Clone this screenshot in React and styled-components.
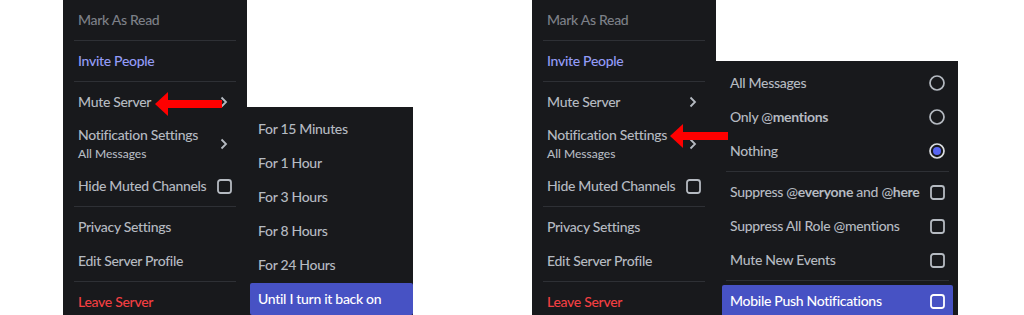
import React from 'react';
import styled, { createGlobalStyle } from 'styled-components';

const Global = createGlobalStyle`
  html, body { margin:0; padding:0; background:#fff; }
  body { font-family: Lato, "Noto Sans", sans-serif; }
`;

const Page = styled.div`
  position:relative; width:1024px; height:315px; overflow:hidden;
  display:flex; background:#fff;
`;
const Scene = styled.div`
  position:relative; margin-left:${p=>p.offset}px; height:315px;
`;
const Menu = styled.div`
  width:184px; height:315px; box-sizing:border-box; padding:4px 8px 0;
  background:#18191c; display:flex; flex-direction:column; gap:2px;
`;
const SubMenu = styled.div`
  position:absolute; left:${p=>p.left}px; top:${p=>p.top}px;
  width:${p=>p.width}px; height:${p=>315-p.top}px; box-sizing:border-box;
  padding:${p=>p.pad}; background:#18191c; overflow:hidden;
  display:flex; flex-direction:column; gap:2px;
`;
const Item = styled.div`
  min-height:32px; box-sizing:border-box; padding:0 ${p=>p.padX||8}px;
  display:flex; align-items:center; justify-content:space-between;
  border-radius:2px; font-size:14px; line-height:18px; font-weight:500;
  letter-spacing:-0.3px;
  color:${p=>p.active?'#fff':p.tone||'#b5bac1'};
  background:${p=>p.active?'#4752c4':'transparent'};
  white-space:nowrap;
  ${p=>p.tall?'min-height:48px; padding-top:6px; padding-bottom:6px;':''}
`;
const Label = styled.div`
  display:flex; flex-direction:column;
`;
const Sub = styled.span`
  font-size:12px; line-height:16px; margin-top:2px; letter-spacing:0;
`;
const Strong = styled.b`
  font-weight:700;
`;
const Separator = styled.div`
  height:1px; background:#2e3035; margin:2px ${p=>p.mx||4}px;
  flex-shrink:0;
`;
const ArrowWrap = styled.svg`
  position:absolute; left:${p=>p.x}px; top:${p=>p.y}px;
`;

function Chevron(){
  return (
    <svg width="8" height="12" viewBox="0 0 8 12" style={{marginRight:4}}>
      <path d="M1.5 1.5 L6 6 L1.5 10.5" fill="none" stroke="#b5bac1" strokeWidth="1.8" />
    </svg>
  );
}
function Check({light}){
  return (
    <svg width="15" height="15" viewBox="0 0 15 15">
      <rect x="1" y="1" width="13" height="13" rx="2.5" fill="none"
        stroke={light?'#fff':'#b5bac1'} strokeWidth="1.8" />
    </svg>
  );
}
function Radio({on}){
  return (
    <svg width="16" height="16" viewBox="0 0 16 16">
      <circle cx="8" cy="8" r="7" fill="none" stroke={on?'#dcdee1':'#b5bac1'} strokeWidth="1.7" />
      {on && <circle cx="8" cy="8" r="4" fill="#5865f2" />}
    </svg>
  );
}
function RedArrow({x, y, w}){
  return (
    <ArrowWrap x={x} y={y} width={w} height="24" viewBox={`0 0 ${w} 24`}>
      <polygon points="0,12 13,0 13,24" fill="#ff0000" />
      <rect x="12" y="8" width={w-12} height="8" fill="#ff0000" />
    </ArrowWrap>
  );
}

function ServerMenu(){
  return (
    <Menu>
      <Item padX={7} tone="#7d8088">Mark As Read</Item>
      <Separator mx={3} />
      <Item padX={7} tone="#949cf7">Invite People</Item>
      <Separator mx={3} />
      <Item padX={7}>Mute Server<Chevron /></Item>
      <Item padX={7} tall>
        <Label>Notification Settings<Sub>All Messages</Sub></Label>
        <Chevron />
      </Item>
      <Item padX={7}>Hide Muted Channels<Check /></Item>
      <Separator mx={3} />
      <Item padX={7}>Privacy Settings</Item>
      <Item padX={7}>Edit Server Profile</Item>
      <Separator mx={3} />
      <Item padX={7} tone="#f23f42">Leave Server</Item>
    </Menu>
  );
}

const muteOptions = ['For 15 Minutes','For 1 Hour','For 3 Hours','For 8 Hours','For 24 Hours'];

export default function App(){
  return (
    <>
      <Global />
      <Page>
        <Scene offset={63}>
          <ServerMenu />
          <SubMenu left={184} top={107} width={166} pad="6px 0 6px 3px">
            {muteOptions.map(o=>(<Item key={o}>{o}</Item>))}
            <Item active>Until I turn it back on</Item>
          </SubMenu>
        </Scene>
        <Scene offset={285}>
          <ServerMenu />
          <SubMenu left={184} top={61} width={242} pad="6px 5px 6px 6px">
            <Item>All Messages<Radio /></Item>
            <Item>Only @<Strong>mentions</Strong><span style={{flex:1}} /><Radio /></Item>
            <Item>Nothing<Radio on /></Item>
            <Separator />
            <Item><span>Suppress @<Strong>everyone</Strong> and @<Strong>here</Strong></span><Check /></Item>
            <Item>Suppress All Role @mentions<Check /></Item>
            <Item>Mute New Events<Check /></Item>
            <Separator />
            <Item active>Mobile Push Notifications<Check light /></Item>
          </SubMenu>
        </Scene>
        <RedArrow x={155} y={92} w={67} />
        <RedArrow x={670} y={124} w={58} />
      </Page>
    </>
  );
}
